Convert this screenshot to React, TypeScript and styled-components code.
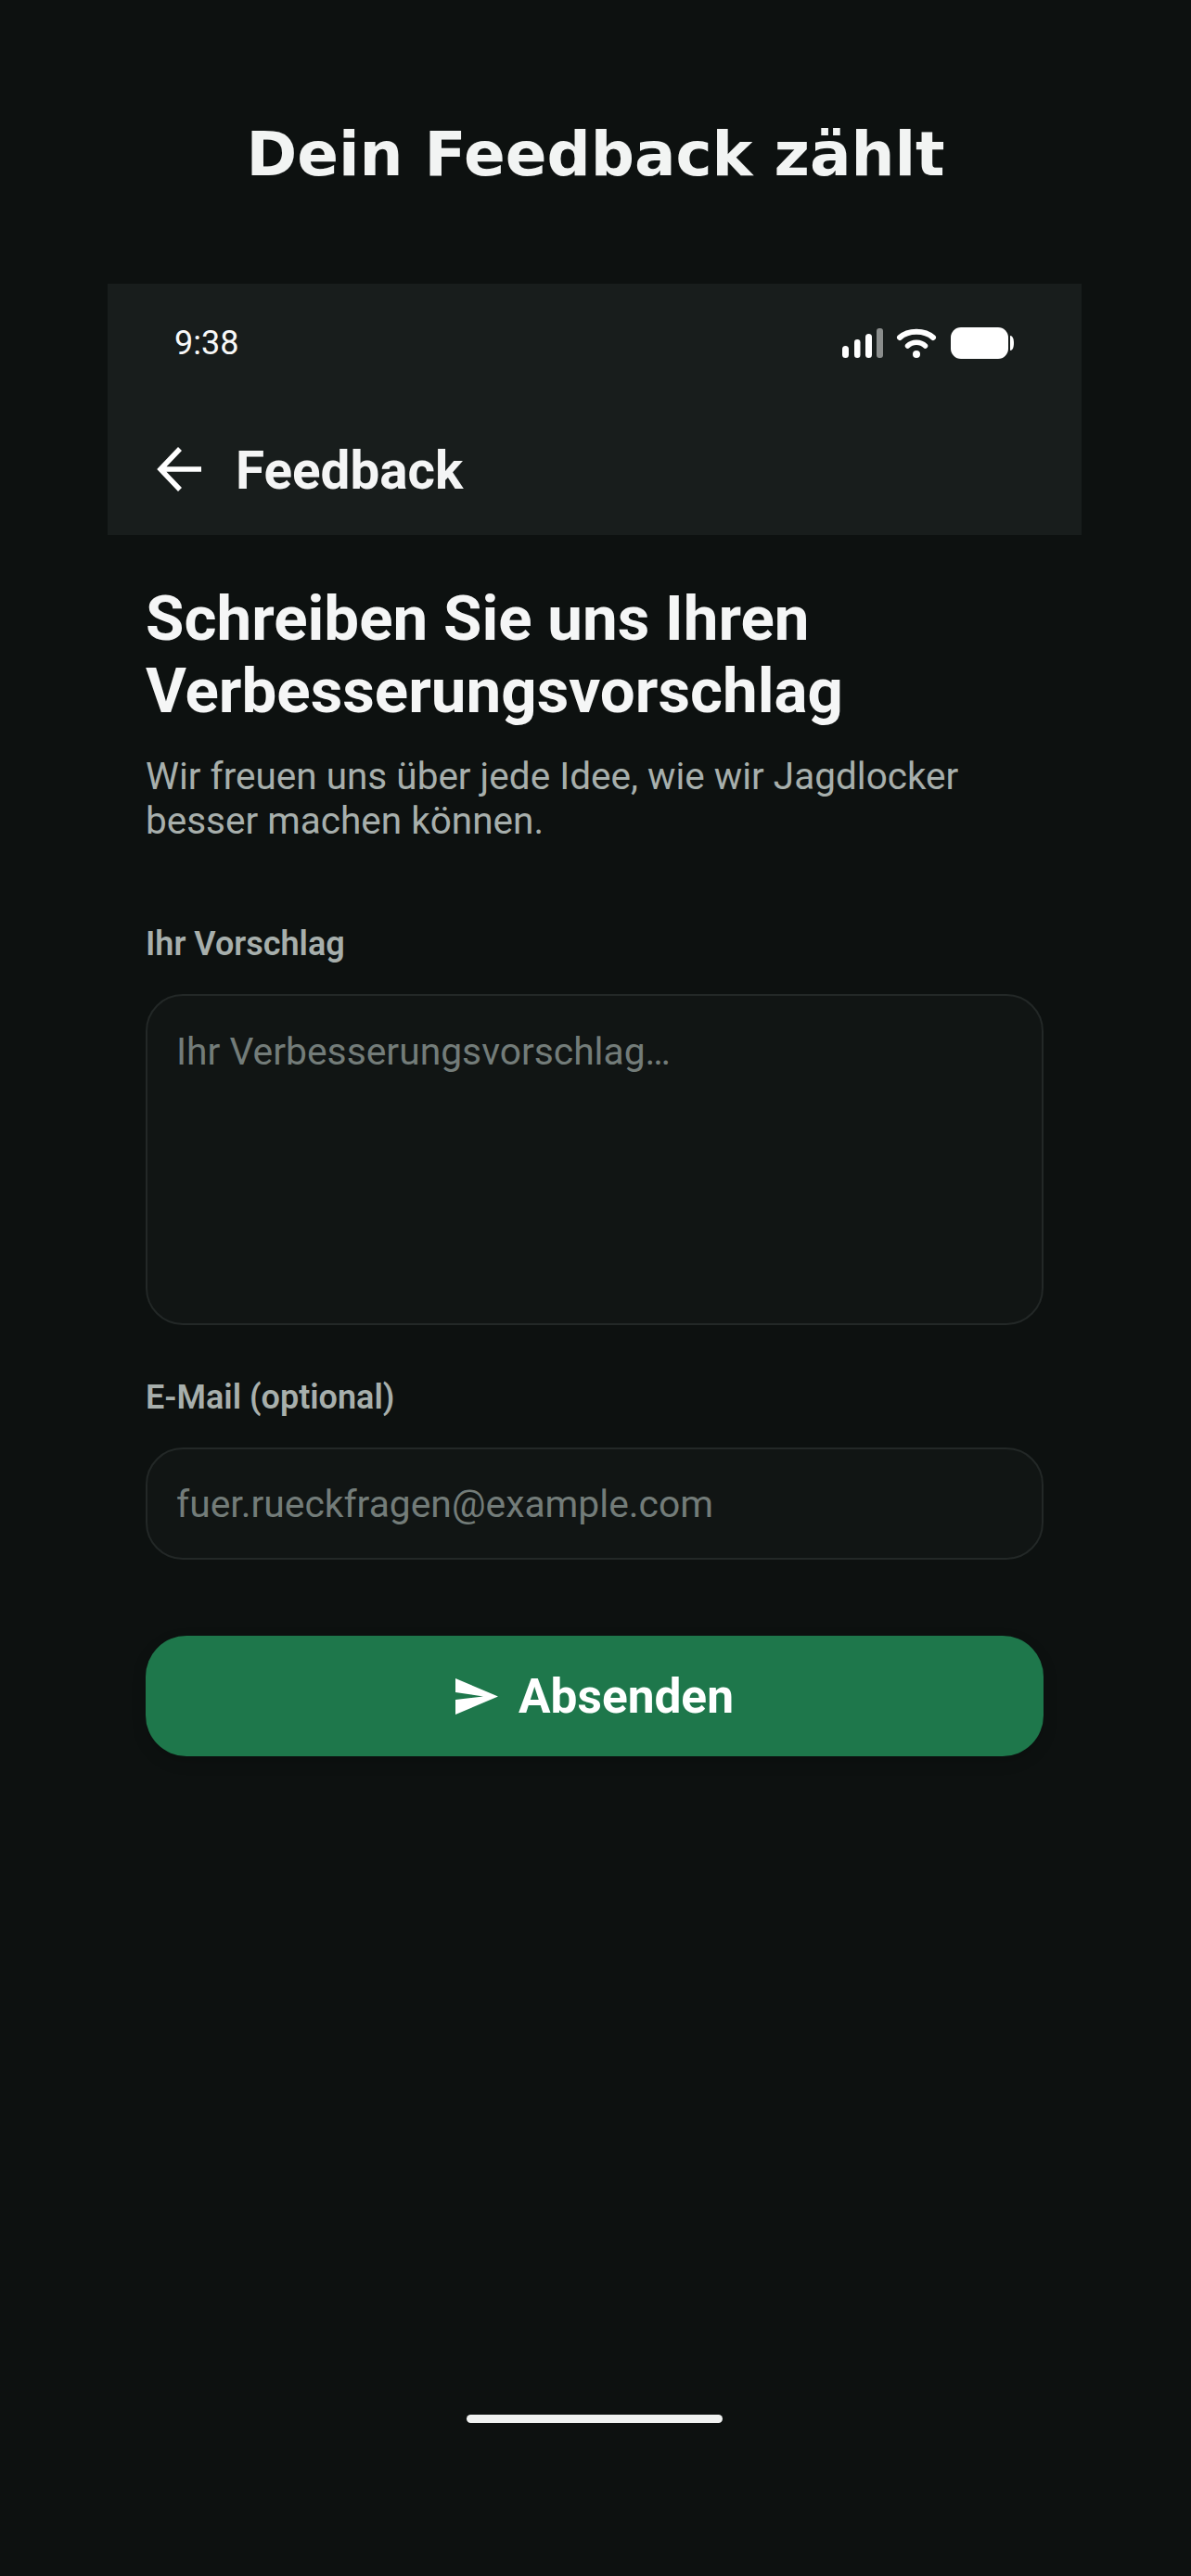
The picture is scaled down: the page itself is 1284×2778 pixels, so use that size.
import styled, { createGlobalStyle } from "styled-components";

const Global = createGlobalStyle`
    html, body {
        margin: 0;
        padding: 0;
        background: #0d1110;
    }
`;

const Page = styled.div`
    width: 1284px;
    height: 2778px;
    box-sizing: border-box;
    display: flex;
    flex-direction: column;
    align-items: center;
    padding-top: 124px;
    background: #0d1110;
    font-family: Roboto, sans-serif;
    overflow: hidden;
`;

const Headline = styled.h1`
    margin: 0;
    height: 86px;
    font-family: "DejaVu Sans", sans-serif;
    font-size: 66px;
    line-height: 86px;
    font-weight: 700;
    color: #f2f4f3;
`;

const Column = styled.div`
    width: 1284px;
    padding-right: 2px;
    box-sizing: border-box;
    display: flex;
    flex-direction: column;
    align-items: center;
    flex: 1;
`;

const TopPanel = styled.header`
    width: 1050px;
    height: 271px;
    margin-top: 96px;
    box-sizing: border-box;
    background: #181d1c;
    display: flex;
    flex-direction: column;
`;

const StatusBar = styled.div`
    height: 128px;
    flex: none;
    box-sizing: border-box;
    padding: 0 73px 0 72px;
    display: flex;
    align-items: center;
    justify-content: space-between;
`;

const Clock = styled.span`
    font-size: 36px;
    color: #f7f8f8;
`;

const NavRow = styled.div`
    display: flex;
    align-items: center;
    gap: 32px;
    padding: 42px 0 0 52px;
`;

const NavTitle = styled.span`
    font-size: 56.6px;
    line-height: 64px;
    font-weight: 700;
    color: #f4f5f5;
`;

const Main = styled.main`
    width: 968px;
    margin-top: 51px;
    display: flex;
    flex-direction: column;
`;

const Heading = styled.h2`
    margin: 0;
    font-size: 67.3px;
    line-height: 78px;
    font-weight: 700;
    color: #f5f6f6;
`;

const Lead = styled.p`
    margin: 29px 0 74px;
    font-size: 40.5px;
    line-height: 48px;
    color: #a7afac;
`;

const Label = styled.div`
    margin-top: 14px;
    font-size: 36px;
    line-height: 42px;
    font-weight: 600;
    color: #a7afac;
`;

const Field = styled.div<{ $multiline?: boolean }>`
    height: ${(p) => (p.$multiline ? 357 : 121)}px;
    margin-top: 33px;
    margin-bottom: ${(p) => (p.$multiline ? 43 : 82)}px;
    box-sizing: border-box;
    padding: ${(p) => (p.$multiline ? "32px" : "0")} 32px 0 31px;
    display: flex;
    align-items: ${(p) => (p.$multiline ? "flex-start" : "center")};
    background: #111514;
    border: 2px solid #232827;
    border-radius: 40px;
    font-size: 40.8px;
    line-height: 56px;
    color: #737c79;
`;

const SendButton = styled.button`
    height: 130px;
    border: none;
    border-radius: 44px;
    background: #1e774b;
    color: #ffffff;
    font-family: Roboto, sans-serif;
    font-size: 51.4px;
    font-weight: 700;
    display: flex;
    align-items: center;
    justify-content: center;
    gap: 22px;
    box-shadow: 0 6px 16px rgba(0, 0, 0, 0.15);
`;

const Spacer = styled.div`
    flex: 1;
`;

const HomeBar = styled.div`
    width: 276px;
    height: 9px;
    margin-bottom: 165px;
    border-radius: 5px;
    background: #f0f2f1;
`;

function StatusIcons() {
    return (
        <svg width="185" height="34" viewBox="0 0 185 34" fill="none">
            <rect x="0" y="20" width="7" height="13" rx="3.5" fill="#fff" />
            <rect x="13" y="13" width="6.5" height="20" rx="3.25" fill="#fff" />
            <rect x="25" y="7" width="7" height="26" rx="3.5" fill="#fff" />
            <rect x="37" y="1" width="7" height="32" rx="3" fill="#8a8d8c" />
            <path d="M62 11 C71 2.500 89 2.500 98 11" stroke="#fff" strokeWidth="6" strokeLinecap="round" />
            <path d="M70.500 20 C75.500 15 84.500 15 89.500 20" stroke="#fff" strokeWidth="5.500" strokeLinecap="round" />
            <circle cx="80" cy="29" r="4" fill="#fff" />
            <rect x="117" y="0" width="62" height="34" rx="11" fill="#fff" />
            <path d="M181 9c2.500 0 4 3 4 8s-1.500 8-4 8z" fill="#fff" />
        </svg>
    );
}

export default function App() {
    return (
        <Page>
            <Global />
            <Headline>Dein Feedback zählt</Headline>
            <Column>
                <TopPanel>
                    <StatusBar>
                        <Clock>9:38</Clock>
                        <StatusIcons />
                    </StatusBar>
                    <NavRow>
                        <svg width="54" height="54" viewBox="0 0 54 54" fill="none">
                            <path d="M49 25H6M26 3 5 25l21 22" stroke="#fff" strokeWidth="5.5" />
                        </svg>
                        <NavTitle>Feedback</NavTitle>
                    </NavRow>
                </TopPanel>
                <Main>
                    <Heading>
                        Schreiben Sie uns Ihren
                        <br />
                        Verbesserungsvorschlag
                    </Heading>
                    <Lead>
                        Wir freuen uns über jede Idee, wie wir Jagdlocker
                        <br />
                        besser machen können.
                    </Lead>
                    <Label>Ihr Vorschlag</Label>
                    <Field $multiline>Ihr Verbesserungsvorschlag…</Field>
                    <Label>E-Mail (optional)</Label>
                    <Field>fuer.rueckfragen@example.com</Field>
                    <SendButton>
                        <svg width="46" height="39" viewBox="0 0 46 39">
                            <path d="M0 0 46 19.500 0 39V23l30-3.500L0 15z" fill="#fff" />
                        </svg>
                        Absenden
                    </SendButton>
                </Main>
                <Spacer />
                <HomeBar />
            </Column>
        </Page>
    );
}
